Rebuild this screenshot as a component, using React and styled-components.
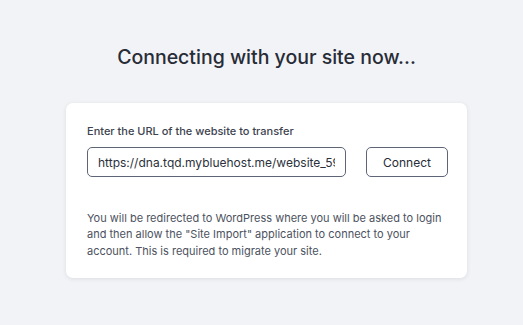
import styled, { createGlobalStyle } from 'styled-components'

const GlobalStyle = createGlobalStyle`
    html, body {
        margin: 0;
        padding: 0;
        background: #f2f3f6;
        font-family: Inter, "Noto Sans", sans-serif;
    }
`

const PageStyle = styled.div`
    display: flex;
    flex-direction: column;
    align-items: center;
    min-height: 325px;
    padding: 45px 0 0 10px;
    box-sizing: border-box;
`

const TitleStyle = styled.h1`
    margin: 0;
    font-size: 19.5px;
    line-height: 24px;
    font-weight: 500;
    color: #272c37;
`

const CardStyle = styled.div`
    margin-top: 34px;
    width: 401px;
    box-sizing: border-box;
    padding: 21px 19px 19px 21px;
    background: #ffffff;
    border-radius: 7px;
    box-shadow: 0 1px 4px rgba(30, 40, 60, 0.1);
`

const LabelStyle = styled.label`
    display: block;
    font-size: 11px;
    line-height: 14px;
    font-weight: 500;
    color: #3d434f;
`

const RowStyle = styled.div`
    display: flex;
    align-items: center;
    gap: 20px;
    margin-top: 9px;
`

const InputStyle = styled.input`
    width: 259px;
    height: 30px;
    box-sizing: border-box;
    padding: 0 10px;
    border: 1px solid #5d6577;
    border-radius: 5px;
    font-family: inherit;
    font-size: 12px;
    color: #2c313b;
    background: #fff;
    outline: none;
`

const ButtonStyle = styled.button`
    width: 82px;
    height: 30px;
    box-sizing: border-box;
    border: 1px solid #5d6577;
    border-radius: 5px;
    background: #fff;
    font-family: inherit;
    font-size: 12px;
    font-weight: 400;
    color: #272c37;
    cursor: pointer;
`

const TextStyle = styled.p`
    margin: 32.5px 0 0;
    font-size: 11px;
    line-height: 16.5px;
    color: #4c5260;
`

function App() {
    return (
        <>
            <GlobalStyle />
            <PageStyle>
                <TitleStyle>Connecting with your site now...</TitleStyle>
                <CardStyle>
                    <LabelStyle htmlFor="site-url">
                        Enter the URL of the website to transfer
                    </LabelStyle>
                    <RowStyle>
                        <InputStyle
                            id="site-url"
                            defaultValue="https://dna.tqd.mybluehost.me/website_59f"
                        />
                        <ButtonStyle>Connect</ButtonStyle>
                    </RowStyle>
                    <TextStyle>
                        You will be redirected to WordPress where you will be
                        asked to login and then allow the "Site Import"
                        application to connect to your account. This is
                        required to migrate your site.
                    </TextStyle>
                </CardStyle>
            </PageStyle>
        </>
    )
}

export default App
